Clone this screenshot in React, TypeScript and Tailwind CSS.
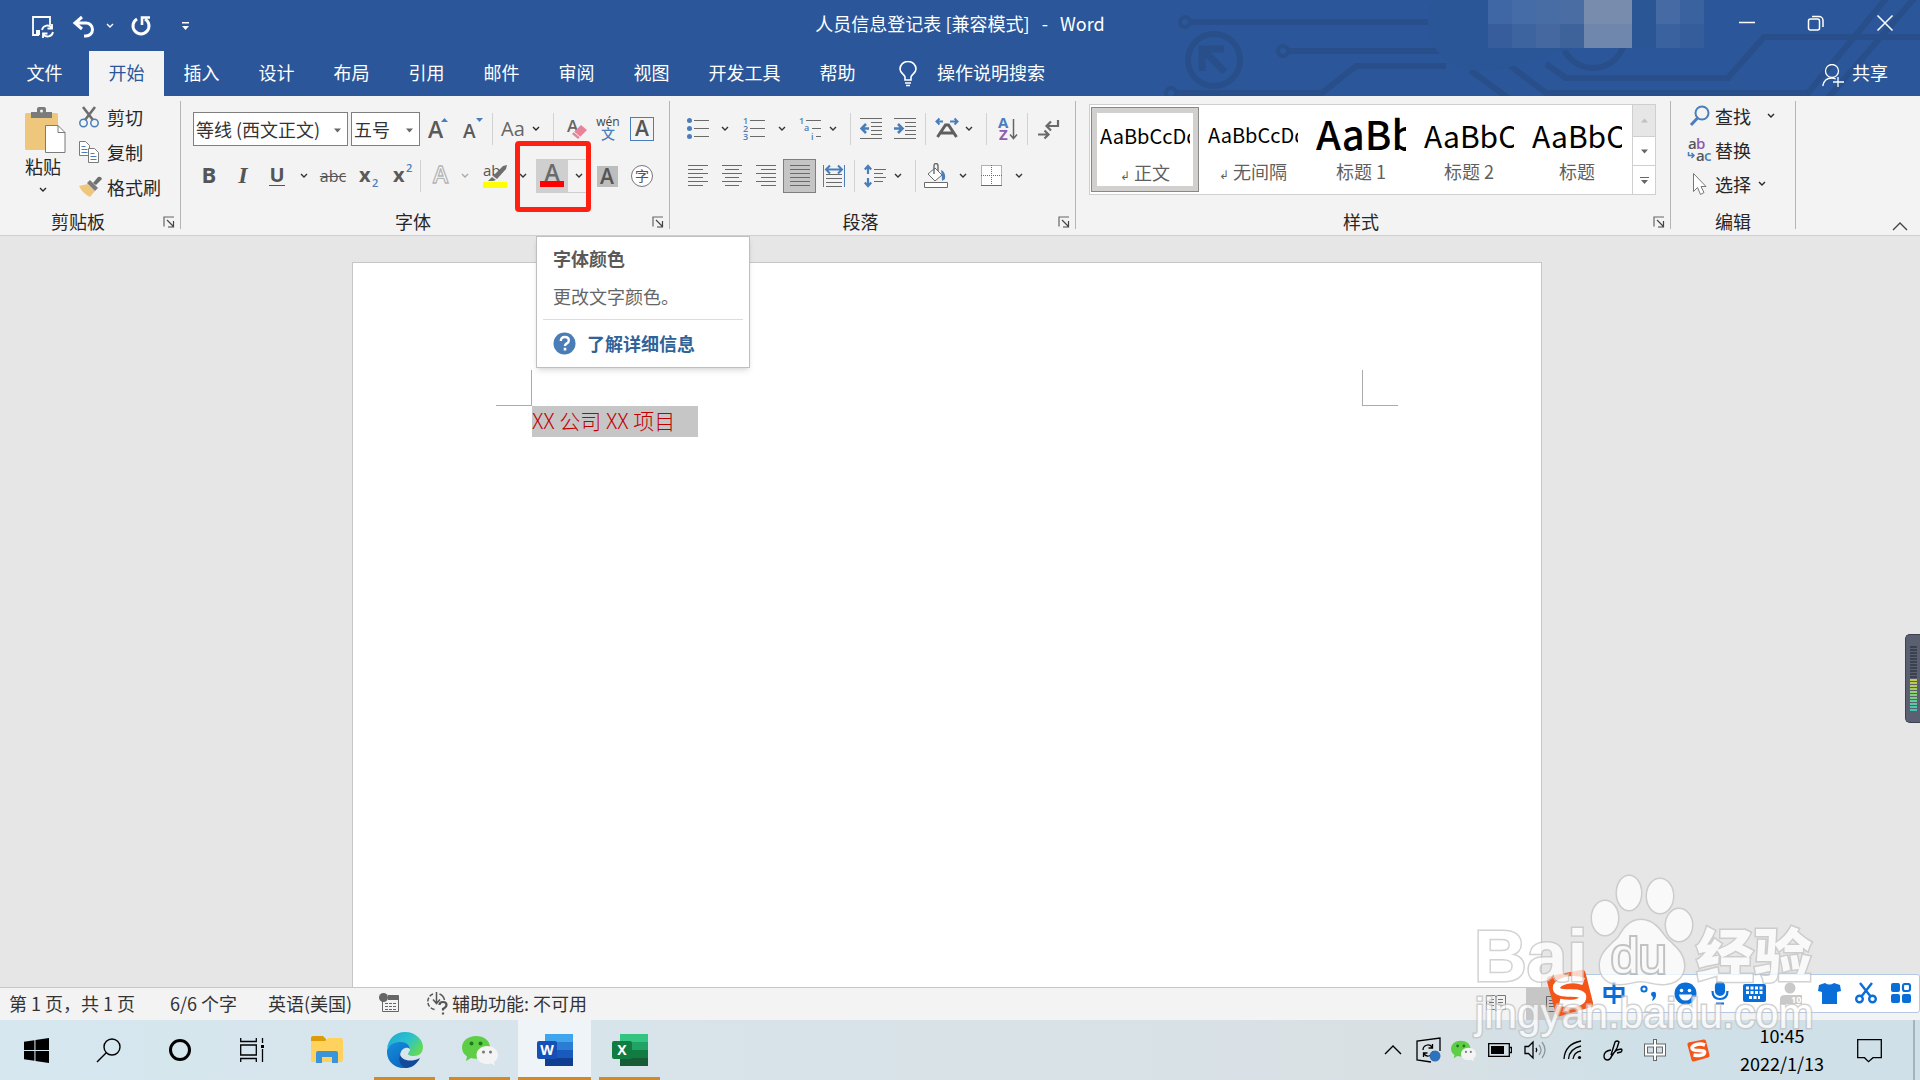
import type { ReactNode } from 'react'
import clsx from 'clsx'

type BoxProps = { className?: string; children?: ReactNode }
type ToolProps = BoxProps & { label: string }

const TABS = ['插入', '设计', '布局', '引用', '邮件', '审阅', '视图']

const STYLES = [
  { name: '正文', sample: 'AaBbCcDd', mark: true, active: true, font: 'text-[20px] pt-1' },
  { name: '无间隔', sample: 'AaBbCcDd', mark: true, active: false, font: 'text-[20px] pt-1' },
  { name: '标题 1', sample: 'AaBbC', mark: false, active: false, font: 'text-[40px] font-medium' },
  { name: '标题 2', sample: 'AaBbC', mark: false, active: false, font: 'text-[30px] pt-1' },
  { name: '标题', sample: 'AaBbC', mark: false, active: false, font: 'text-[30px] pt-1' },
]

const MOSAIC = [
  ['#4067a5', '#466ca8', '#486ca4', '#4a6ea3', '#788dad', '#788dad', '#2a5696', '#466ba4', '#3a629f'],
  ['#375d9c', '#3e64a0', '#44689f', '#3e639b', '#6f87ad', '#6f87ad', '#2a5696', '#3a629e', '#355d9c'],
]

const METER = [
  '#3c4150', '#3c4150', '#3c4150', '#3c4150', '#3c4150', '#3c4150', '#3c4150', '#3c4150', '#3c4150', '#3c4150', '#3c4150',
  '#c3c84f', '#bcca55', '#b0cc5a', '#a3cf62', '#95d06c', '#86cf78', '#76ce86', '#66cb94', '#5ac8a2', '#50c4ac', '#48c0b2',
]

function Tool({ className, label, children }: ToolProps) {
  return (
    <button type="button" aria-label={label} className={clsx('flex h-full shrink-0 items-center justify-center', className)}>
      {children}
    </button>
  )
}

function Chevron() {
  return (
    <svg width="8" height="6" viewBox="0 0 8 6" className="shrink-0" fill="none" stroke="currentColor" strokeWidth="1.4">
      <path d="M1 1l3 3 3-3" />
    </svg>
  )
}

// Drop-down arrow beside a tool
function Drop({ className, label = '更多' }: { className?: string; label?: string }) {
  return (
    <Tool label={label} className={className}>
      <Chevron />
    </Tool>
  )
}

function Sep({ className }: { className?: string }) {
  return <div className={clsx('h-8 w-px shrink-0 bg-[#d2d2d2]', className)} />
}

function Launcher() {
  return (
    <button type="button" aria-label="对话框启动器" className="mt-2 flex w-6 items-center pl-[7px]">
      <svg width="12" height="12" viewBox="0 0 12 12" fill="none" stroke="#666" strokeWidth="1.2">
        <path d="M1 10.500V1h10" />
        <path d="M4 4l6.500 6.500M10.500 5v6H5" stroke="#444" />
      </svg>
    </button>
  )
}

type GroupProps = BoxProps & { label: string; launcher?: boolean; bodyClass?: string }

function Group({ className, bodyClass, label, launcher, children }: GroupProps) {
  return (
    <section aria-label={label} className={clsx('mt-[5px] flex h-32 shrink-0 flex-col border-r border-[#b5b5b5]', className)}>
      <div className={clsx('flex-1', bodyClass)}>{children}</div>
      <div className="flex h-[22px] items-center">
        <span className="mt-[6px] flex-1 text-center">{label}</span>
        {launcher && <Launcher />}
      </div>
    </section>
  )
}

/* ---------- title bar ---------- */

function Circuit() {
  return (
    <svg className="absolute top-0 right-0" width="760" height="96" viewBox="1160 0 760 96" fill="none" stroke="#284f8a" strokeWidth="6">
      <circle cx="1185" cy="22" r="5" strokeWidth="4" />
      <path d="M1190 22H1440" />
      <circle cx="1214" cy="60" r="26" />
      <path d="M1202 71V49H1224M1203 50l22 22" strokeWidth="7" />
      <circle cx="1283" cy="51" r="5" strokeWidth="4" />
      <path d="M1288 51H1440" />
      <circle cx="1171" cy="93" r="5" strokeWidth="4" />
      <path d="M1176 93h146l34-27h90" />
      <path d="M1470 70l38 28M1508 64l38 29h262L1888-4" />
      <path d="M1546 64l20 14h162l36-41h156" />
      <path d="M1828 98l90-104" />
      <circle cx="1593" cy="36" r="32" />
      <path d="M1440-10h160v50l-100 30h-20a48 48 0 0 1-40-80z" fill="#2a5596" stroke="none" />
    </svg>
  )
}

function TitleBar() {
  return (
    <div className="relative flex h-[51px] items-center text-white">
      <div className="flex flex-1 items-center">
        <button type="button" aria-label="保存" className="ml-[31px]">
          <svg width="24" height="24" viewBox="0 0 24 24" fill="none" stroke="white" strokeWidth="1.8">
            <path d="M8 21H2V3h17v8" />
            <path d="M5 21v-5h4v5z" fill="white" stroke="none" />
            <path d="M11 16a5.500 5.500 0 0 1 10-2m0-4v4.500h-4.500M22 18a5.500 5.500 0 0 1-10 2m0 4v-4.500h4.500" />
          </svg>
        </button>
        <button type="button" aria-label="撤消" className="ml-[17px]">
          <svg width="24" height="24" viewBox="0 0 24 24" fill="none" stroke="white" strokeWidth="3">
            <path d="M10 3L3 9l7 6M3.500 9H14a6 6 0 0 1 0 13h-2" />
          </svg>
        </button>
        <Drop className="ml-[6px] w-4" label="撤消列表" />
        <button type="button" aria-label="重复" className="ml-[11px]">
          <svg width="24" height="24" viewBox="0 0 24 24" fill="none" stroke="white" strokeWidth="3">
            <path d="M8 5a8 8 0 1 0 8 0" />
            <path d="M13 11V3.500h8" strokeWidth="2.600" />
          </svg>
        </button>
        <button type="button" aria-label="自定义快速访问工具栏" className="ml-7">
          <svg width="10" height="10" viewBox="0 0 10 10" fill="white">
            <path d="M1 1h7v1.500H1zM1 5h7L4.500 9z" />
          </svg>
        </button>
      </div>
      <h1 className="pb-[6px] whitespace-pre">人员信息登记表 [兼容模式]   -   Word</h1>
      <div className="flex h-12 flex-1 self-start justify-end">
        <div className="grid grid-cols-9 self-start">
          {MOSAIC.flat().map((color, i) => (
            <span key={i} className="h-6 w-6" style={{ background: color }} />
          ))}
        </div>
        <button type="button" aria-label="最小化" className="ml-2 flex w-[69px] justify-center pt-[14px]">
          <svg width="18" height="18" viewBox="0 0 18 18" stroke="white" strokeWidth="1.500"><path d="M1 8.500h16" /></svg>
        </button>
        <button type="button" aria-label="还原" className="flex w-[69px] justify-center pt-[14px]">
          <svg width="18" height="18" viewBox="0 0 18 18" fill="none" stroke="white" strokeWidth="1.500">
            <rect x="1.500" y="5" width="11" height="11" rx="2" />
            <path d="M5 2.500h7a4 4 0 0 1 4 4V13" />
          </svg>
        </button>
        <button type="button" aria-label="关闭" className="mr-px flex w-[69px] justify-center pt-[14px]">
          <svg width="18" height="18" viewBox="0 0 18 18" stroke="white" strokeWidth="1.500"><path d="M1.500 1.500l15 15M16.500 1.500l-15 15" /></svg>
        </button>
      </div>
    </div>
  )
}

function TabBar() {
  return (
    <nav className="relative flex h-[45px] items-stretch text-white">
      <button type="button" className="w-[89px] pb-1">文件</button>
      <button type="button" className="w-[75px] bg-[#f3f3f3] pb-1 text-[#2b579a]">开始</button>
      {TABS.map((tab) => (
        <button key={tab} type="button" className="w-[75px] pb-1">{tab}</button>
      ))}
      <button type="button" className="w-[111px] pb-1">开发工具</button>
      <button type="button" className="w-[75px] pb-1">帮助</button>
      <button type="button" className="flex items-center gap-5 pb-1 pl-6">
        <svg width="18" height="26" viewBox="0 0 18 26" fill="none" stroke="white" strokeWidth="1.600" className="mt-1">
          <path d="M6 19v-3C5 13 1 12 1 8a8 7.500 0 0 1 16 0c0 4-4 5-5 8v3zM6 22h6M7 24.500h4" />
        </svg>
        操作说明搜索
      </button>
      <button type="button" className="mr-8 ml-auto flex items-center gap-2 pb-1">
        <svg width="22" height="24" viewBox="0 0 22 24" fill="none" stroke="white" strokeWidth="1.300" className="mt-2">
          <circle cx="10" cy="7" r="6.500" />
          <path d="M.7 22c1-5 4-8 9-8 2 0 3 .4 4 1M16 13v10M11 18h11" />
        </svg>
        共享
      </button>
    </nav>
  )
}

/* ---------- ribbon groups ---------- */

function Clipboard() {
  return (
    <Group label="剪贴板" launcher className="w-[181px]">
      <div className="flex">
        <button type="button" className="flex w-[77px] flex-col items-center pt-[6px] pl-[9px]">
          <svg width="44" height="46" viewBox="0 0 44 46" className="ml-[5px]">
            <rect x="1" y="6" width="33" height="37" rx="1.500" fill="#efc77c" />
            <path d="M7 5h6V2q0-2 2-2h5q2 0 2 2v3h6v6H7z" fill="#7b7b7b" />
            <circle cx="17.500" cy="4" r="1.500" fill="#f3f3f3" />
            <path d="M21.500 18.500H34l7 7V45.500H21.500z" fill="white" stroke="#7b7b7b" />
            <path d="M34 18.500v7h7" fill="none" stroke="#7b7b7b" />
          </svg>
          <span className="w-10 text-center leading-[26px]">粘贴</span>
          <span className="mt-2"><Chevron /></span>
        </button>
        <div className="flex flex-col">
          <button type="button" className="flex h-[35px] items-center gap-2 pb-1 pl-[2px]">
            <svg width="20" height="22" viewBox="0 0 20 22" fill="none">
              <path d="M4 1l10 13M16 1L6 14" stroke="#6e6e6e" strokeWidth="2.600" />
              <circle cx="4.500" cy="17" r="3.700" stroke="#4a7ebb" strokeWidth="1.500" />
              <circle cx="15.500" cy="17" r="3.700" stroke="#4a7ebb" strokeWidth="1.500" />
            </svg>
            剪切
          </button>
          <button type="button" className="flex h-[35px] items-center gap-2 pb-1 pl-[2px]">
            <svg width="20" height="24" viewBox="0 0 20 24" fill="white" stroke="#7b7b7b">
              <path d="M.5 1.500h6l4 4v10H.5z" />
              <path d="M2.500 6.500h4M2.500 9.500h6M2.500 12.500h6" stroke="#4a7ebb" />
              <path d="M9.500 8.500h6l4 4v10h-10z" />
              <path d="M11.500 13.500h4M11.500 16.500h6M11.500 19.500h6" stroke="#4a7ebb" />
            </svg>
            复制
          </button>
          <button type="button" className="flex h-[35px] items-center gap-1 pb-1 pl-[2px]">
            <svg width="24" height="22" viewBox="0 0 24 22">
              <path d="M0 10l9-2 7 7-5 6q-8-4-11-11z" fill="#efc77c" />
              <path d="M8 7l3-3 8 8-3 3z" fill="#7b7b7b" />
              <path d="M14 7l5-6q3-1 4 2l-6 6z" fill="#6e6e6e" />
            </svg>
            格式刷
          </button>
        </div>
      </div>
    </Group>
  )
}

function Combo({ label, value, className }: { label: string; value: string; className?: string }) {
  return (
    <label className={clsx('relative block h-full shrink-0 border border-[#7f7f7f] bg-white', className)}>
      <select aria-label={label} className="h-full w-full appearance-none px-[2px] text-[#333] outline-none">
        <option>{value}</option>
      </select>
      <svg className="pointer-events-none absolute top-[15px] right-[6px]" width="7" height="5" viewBox="0 0 7 5" fill="#666">
        <path d="M0 .5h7L3.500 4.500z" />
      </svg>
    </label>
  )
}

const latin = "font-['Open_Sans',sans-serif] leading-none"

function FontGroup() {
  return (
    <Group label="字体" launcher className="w-[489px]" bodyClass="pl-3">
      <div className="mt-[11px] flex h-[34px] items-center">
        <Combo label="字体" value="等线 (西文正文)" className="w-[155px]" />
        <Combo label="字号" value="五号" className="ml-[3px] w-[69px]" />
        <Tool label="增大字号" className="w-[35px]">
          <svg width="20" height="24" viewBox="0 0 20 24" className="overflow-visible">
            <text x="0" y="21" fontSize="23" fontWeight="600" fill="#5a5a5a" fontFamily="Open Sans">A</text>
            <path d="M13 5l3.500-4L20 5z" fill="#4a7ebb" />
          </svg>
        </Tool>
        <Tool label="减小字号" className="w-[35px]">
          <svg width="20" height="24" viewBox="0 0 20 24" className="overflow-visible">
            <text x="0" y="21" fontSize="19" fontWeight="600" fill="#5a5a5a" fontFamily="Open Sans">A</text>
            <path d="M13 1l3.500 4L20 1z" fill="#4a7ebb" />
          </svg>
        </Tool>
        <Sep className="mx-[2px]" />
        <Tool label="更改大小写" className={clsx('w-9 text-[20px] font-medium text-[#666]', latin)}>Aa</Tool>
        <Drop className="w-[10px]" />
        <Sep className="mr-[12px] ml-[12px]" />
        <Tool label="清除格式" className="w-[22px]">
          <svg width="20" height="24" viewBox="0 0 20 24" className="overflow-visible">
            <text x="0" y="15" fontSize="17" fontWeight="600" fill="#666" fontFamily="Open Sans">A</text>
            <path d="M5 17l9-9 6 5-9 9z" fill="#e8839a" />
            <path d="M7 15l6 5" stroke="#f3f3f3" />
          </svg>
        </Tool>
        <Tool label="拼音指南" className="w-[42px]">
          <svg width="24" height="26" viewBox="0 0 24 26" className="overflow-visible">
            <text x="11" y="10" fontSize="12" textAnchor="middle" fill="#444" fontFamily="Open Sans">wén</text>
            <text x="11" y="23" fontSize="14" fontWeight="500" textAnchor="middle" fill="#4a7ebb" fontFamily="Noto Sans CJK SC">文</text>
          </svg>
        </Tool>
        <Tool label="字符边框" className="w-6">
          <span className={clsx('h-6 w-6 border border-[#4a7ebb] text-[21px] font-semibold text-[#555]', latin)}>A</span>
        </Tool>
      </div>
      <div className="mt-[13px] flex h-[34px] items-center text-[#555]">
        <Tool label="加粗" className={clsx('w-8 pb-1 text-[22px] font-bold', latin)}>B</Tool>
        <Tool label="倾斜" className="w-9 pb-[2px] font-['Liberation_Serif',serif] text-[24px] leading-none font-bold italic">I</Tool>
        <Tool label="下划线" className={clsx('w-8 pb-[2px] text-[20px] font-bold', latin)}>
          <span className="border-b border-[#555]">U</span>
        </Tool>
        <Drop className="w-[22px] text-[#333]" />
        <Tool label="删除线" className={clsx('w-9 text-[16px] line-through', latin)}>abc</Tool>
        <Tool label="下标" className="w-[34px]">
          <svg width="20" height="26" viewBox="0 0 20 26" fontFamily="Open Sans" className="overflow-visible">
            <text x="1" y="19" fontSize="20" fontWeight="700" fill="#5a5a5a">x</text>
            <text x="14" y="24" fontSize="11" fontWeight="600" fill="#4a7ebb">2</text>
          </svg>
        </Tool>
        <Tool label="上标" className="w-[34px]">
          <svg width="20" height="26" viewBox="0 0 20 26" fontFamily="Open Sans" className="overflow-visible">
            <text x="1" y="19" fontSize="20" fontWeight="700" fill="#5a5a5a">x</text>
            <text x="14" y="9" fontSize="11" fontWeight="600" fill="#4a7ebb">2</text>
          </svg>
        </Tool>
        <Sep className="mr-[2px] ml-px" />
        <Tool label="文本效果" className="w-9">
          <svg width="20" height="24" viewBox="0 0 20 24" className="overflow-visible">
            <text x="2" y="19" fontSize="23" fontWeight="600" fill="white" stroke="#b5b5b5" strokeWidth="1.300" fontFamily="Open Sans">A</text>
          </svg>
        </Tool>
        <Drop className="w-3 text-[#aaa]" />
        <Tool label="文本突出显示颜色" className="w-12">
          <svg width="24" height="26" viewBox="0 0 24 26" className="overflow-visible">
            <text x="0" y="13" fontSize="15" fill="#555" fontFamily="Open Sans">ab</text>
            <path d="M10 13l10-10 4-1-1 4-9 10z" fill="#6e6e6e" />
            <path d="M5 18l4-4 4 3-3 1z" fill="#6e6e6e" />
            <path d="M0 19h24v6H0z" fill="#ff0" />
          </svg>
        </Tool>
        <Drop className="w-2 text-[#333]" />
        <div className="relative ml-[9px] flex h-full">
          <Tool label="字体颜色" className="w-8 bg-[#cfcfcf]">
            <svg width="24" height="26" viewBox="0 0 24 26" className="overflow-visible">
              <text x="12" y="18" fontSize="23" fontWeight="600" textAnchor="middle" fill="#6a6a6a" fontFamily="Open Sans">A</text>
              <path d="M0 18h24v6H0z" fill="red" />
            </svg>
          </Tool>
          <Drop className="w-[18px] border-y border-[#cfcfcf] pl-1 text-[#333]" />
          <div className="pointer-events-none absolute -top-[18px] -left-[21px] z-10 h-[71px] w-[76px] rounded-[4px] border-[5px] border-[#ff2012]" />
        </div>
        <Tool label="字符底纹" className="w-[42px]">
          <span className={clsx('h-[21px] w-[21px] bg-[#bdbdbd] text-[21px] font-semibold', latin)}>A</span>
        </Tool>
        <Tool label="带圈字符" className="w-7">
          <span className="h-[22px] w-[22px] rounded-full border border-[#777] bg-white text-[14px] leading-[18px]">字</span>
        </Tool>
      </div>
    </Group>
  )
}

function Lines({ d, w = 22 }: { d: string; w?: number }) {
  return (
    <svg width={w} height="24" viewBox={`0 0 ${w} 24`} fill="none" stroke="#6a6a6a" className="shrink-0">
      <path d={d} />
    </svg>
  )
}

function ParagraphGroup() {
  return (
    <Group label="段落" launcher className="w-[406px]" bodyClass="pl-[11px]">
      <div className="mt-[11px] flex h-[34px] items-center text-[#333]">
        <Tool label="项目符号" className="w-[34px]">
          <svg width="22" height="24" viewBox="0 0 22 24" fill="#4a7ebb" stroke="#6a6a6a">
            <path d="M7 3.500h15M7 11.500h15M7 19.500h15" />
            <g stroke="none"><circle cx="2.500" cy="3.500" r="2.500" /><circle cx="2.500" cy="11.500" r="2.500" /><circle cx="2.500" cy="19.500" r="2.500" /></g>
          </svg>
        </Tool>
        <Drop className="w-5" />
        <Tool label="编号" className="w-[38px]">
          <svg width="22" height="24" viewBox="0 0 22 24" fill="#4a7ebb" fontSize="9" fontFamily="Open Sans" fontWeight="600" className="overflow-visible">
            <path d="M7 3.500h15M7 11.500h15M7 19.500h15" stroke="#6a6a6a" />
            <text x="0" y="7">1</text><text x="0" y="15">2</text><text x="0" y="23">3</text>
          </svg>
        </Tool>
        <Drop className="w-[18px]" />
        <Tool label="多级列表" className="w-[38px]">
          <svg width="22" height="24" viewBox="0 0 22 24" fill="#4a7ebb" fontSize="9" fontFamily="Open Sans" fontWeight="600" className="overflow-visible">
            <path d="M7 3.500h15M13 11.500h9M17 19.500h5" stroke="#6a6a6a" />
            <text x="0" y="7">1</text><text x="5" y="14">a</text><text x="12" y="23">i</text>
          </svg>
        </Tool>
        <Drop className="w-2" />
        <Sep className="mr-[9px] ml-[13px]" />
        <Tool label="减少缩进量" className="w-[22px]">
          <svg width="22" height="24" viewBox="0 0 22 24" fill="none" stroke="#6a6a6a">
            <path d="M0 1.500h22M11 5.500h11M11 9.500h11M11 13.500h11M11 17.500h11M0 21.500h22" />
            <path d="M9 11.500H2M6 7l-4.500 4.500L6 16" stroke="#4a7ebb" strokeWidth="2.600" />
          </svg>
        </Tool>
        <Tool label="增加缩进量" className="ml-3 w-[22px]">
          <svg width="22" height="24" viewBox="0 0 22 24" fill="none" stroke="#6a6a6a">
            <path d="M0 1.500h22M11 5.500h11M11 9.500h11M11 13.500h11M11 17.500h11M0 21.500h22" />
            <path d="M0 11.500h7M4 7l4.500 4.500L4 16" stroke="#4a7ebb" strokeWidth="2.600" />
          </svg>
        </Tool>
        <Sep className="mx-[9px]" />
        <Tool label="中文版式" className="w-6">
          <svg width="24" height="24" viewBox="0 0 24 24" fill="none" stroke="#4a7ebb" strokeWidth="2">
            <path d="M8 4.500H2M4.500 1.500l-3 3 3 3M15 4.500h7M19.500 1.500l3 3-3 3" />
            <path d="M2.500 20L10.500 8h3l8 12M6 16h12" stroke="#5f5f5f" strokeWidth="3" />
          </svg>
        </Tool>
        <Drop className="w-5" />
        <Sep className="mr-[11px] ml-[7px]" />
        <Tool label="排序" className="w-5">
          <svg width="20" height="26" viewBox="0 0 20 26" fontFamily="Open Sans" fontWeight="700" fontSize="15" className="overflow-visible">
            <text x="0" y="12" fill="#4a7ebb">A</text>
            <text x="1" y="24" fill="#8e5bb0">Z</text>
            <path d="M15.500 3v19M12 18.500l3.500 4 3.500-4" fill="none" stroke="#666" strokeWidth="1.500" />
          </svg>
        </Tool>
        <Sep className="mr-[10px] ml-[9px]" />
        <Tool label="显示编辑标记" className="w-[22px]">
          <svg width="22" height="24" viewBox="0 0 22 24" fill="none" stroke="#6a6a6a" strokeWidth="2.200">
            <path d="M20 3v6H9M13 4.500L8.500 9l4.500 4.500M0 17.500h10M6.500 13.500l4 4-4 4" />
          </svg>
        </Tool>
      </div>
      <div className="mt-[13px] flex h-[34px] items-center text-[#333]">
        <Tool label="左对齐" className="w-[34px]"><Lines w={20} d="M0 1.500h20M0 5.500h15M0 9.500h20M0 13.500h15M0 17.500h20M0 21.500h15" /></Tool>
        <Tool label="居中" className="w-[34px]"><Lines w={20} d="M0 1.500h20M3 5.500h14M0 9.500h20M3 13.500h14M0 17.500h20M3 21.500h14" /></Tool>
        <Tool label="右对齐" className="w-[34px]"><Lines w={20} d="M0 1.500h20M5 5.500h15M0 9.500h20M5 13.500h15M0 17.500h20M5 21.500h15" /></Tool>
        <Tool label="两端对齐" className="w-[33px] border border-[#7f7f7f] bg-[#c5c5c5]"><Lines w={20} d="M0 1.500h20M0 5.500h20M0 9.500h20M0 13.500h20M0 17.500h20M0 21.500h20" /></Tool>
        <Tool label="分散对齐" className="w-9">
          <svg width="22" height="24" viewBox="0 0 22 24" fill="none" stroke="#6a6a6a">
            <path d="M3 10.500h16M3 14.500h16M3 18.500h16M3 22.500h16" />
            <path d="M.5 1v22M21.500 1v22" stroke="#4a7ebb" />
            <path d="M4 5.500h14M7 1.500l-4 4 4 4M15 1.500l4 4-4 4" stroke="#4a7ebb" strokeWidth="2" />
          </svg>
        </Tool>
        <Sep className="mr-[9px] ml-[2px]" />
        <Tool label="行和段落间距" className="w-[22px]">
          <svg width="22" height="24" viewBox="0 0 22 24" fill="none" stroke="#6a6a6a">
            <path d="M10 5.500h12M10 9.500h9M10 13.500h12M10 17.500h9" />
            <path d="M4 2v8M.8 5.500L4 2l3.200 3.500M4 14v8M.8 18.500L4 22l3.200-3.500" stroke="#4a7ebb" strokeWidth="2.200" />
          </svg>
        </Tool>
        <Drop className="w-6" />
        <Sep className="mr-2 ml-[5px]" />
        <Tool label="底纹" className="w-6">
          <svg width="24" height="26" viewBox="0 0 24 26" fill="white" stroke="#6a6a6a">
            <path d="M11 5l7 7-7 6-7-7z" />
            <path d="M10 11V3q0-2.500 2-2.500T14 3v5" fill="none" strokeWidth="1.400" />
            <path d="M17 7q5 2 4 9l-3 2q0-6-1-11z" fill="#4a7ebb" stroke="none" />
            <path d="M.5 19.500h23v5H.5z" />
          </svg>
        </Tool>
        <Drop className="w-[30px]" />
        <Tool label="边框" className="w-7">
          <svg width="22" height="24" viewBox="0 0 22 24" fill="white" stroke="#6a6a6a">
            <path d="M.5 1.500h20v20H.5zM10.500 1v20M0 11.500h21" strokeDasharray="1 1" />
            <path d="M0 21.500h21" />
          </svg>
        </Tool>
        <Drop className="w-[26px]" />
      </div>
    </Group>
  )
}

function StylesGroup() {
  return (
    <Group label="样式" launcher className="w-[595px]" bodyClass="pl-[13px]">
      <div className="mt-[3px] flex h-[91px] w-[567px] border border-[#cfcfcf] bg-white pl-px">
        {STYLES.map((s) => (
          <button
            key={s.name}
            type="button"
            className={clsx(
              'my-[2px] flex w-[108px] shrink-0 flex-col items-center px-1',
              s.active && 'border border-[#8a8886] bg-white ring-5 ring-[#d2d0ce] ring-inset',
            )}
          >
            <span className={clsx('flex h-[51px] w-[90px] items-center overflow-hidden leading-none whitespace-nowrap text-black', s.font)}>
              {s.sample}
            </span>
            <span className="leading-[26px] text-[#5f5f5f]">
              {s.mark && <span className="mr-1 text-[12px]">↲</span>}
              {s.name}
            </span>
          </button>
        ))}
        <div className="ml-auto flex w-[23px] flex-col border-l border-[#cfcfcf]">
          <button type="button" aria-label="上一行" className="flex h-[31px] items-center justify-center bg-[#e6e6e6]">
            <svg width="7" height="5" fill="#c0c0c0"><path d="M0 4.500h7L3.500.5z" /></svg>
          </button>
          <button type="button" aria-label="下一行" className="flex h-[30px] items-center justify-center border-y border-[#cfcfcf]">
            <svg width="7" height="5" fill="#666"><path d="M0 .5h7L3.500 4.500z" /></svg>
          </button>
          <button type="button" aria-label="其他样式" className="flex flex-1 items-center justify-center">
            <svg width="9" height="9" fill="#666"><path d="M0 1h9v1H0zM1 4h7L4.500 8z" /></svg>
          </button>
        </div>
      </div>
    </Group>
  )
}

function EditGroup() {
  return (
    <Group label="编辑" className="w-[125px]">
      <div className="flex flex-col pl-4">
        <button type="button" className="flex h-[34px] items-center pb-1">
          <svg width="28" height="22" viewBox="0 0 28 22" fill="none" stroke="#4a7ebb">
            <circle cx="15" cy="8" r="6.500" strokeWidth="2" />
            <path d="M10.500 13L4 20" strokeWidth="3" />
          </svg>
          查找
          <span className="ml-4"><Chevron /></span>
        </button>
        <button type="button" className="flex h-[34px] items-center pb-1">
          <svg width="28" height="26" viewBox="0 0 28 26" fontSize="15" fontWeight="600" fontFamily="Open Sans" className="overflow-visible">
            <text x="1" y="12" fill="#555">a</text>
            <text x="9" y="12" fill="#8e5bb0">b</text>
            <text x="9" y="24" fill="#555">a</text>
            <text x="17" y="24" fill="#4a7ebb">c</text>
            <path d="M1.500 15v3.500h5M4.500 16l2.500 2.500L4.500 21" fill="none" stroke="#4a7ebb" strokeWidth="1.500" />
          </svg>
          替换
        </button>
        <button type="button" className="flex h-[34px] items-center pb-1">
          <svg width="28" height="24" viewBox="0 0 28 24" fill="white" stroke="#777">
            <path d="M6.500 1.500v18l4-4 3 7 3.500-2-3-6h5z" />
          </svg>
          选择
          <span className="ml-[7px]"><Chevron /></span>
        </button>
      </div>
    </Group>
  )
}

function Ribbon() {
  return (
    <div className="flex h-[140px] border-b border-[#cfcfcf] bg-[#f3f3f3] text-[#262626]">
      <Clipboard />
      <FontGroup />
      <ParagraphGroup />
      <StylesGroup />
      <EditGroup />
      <button type="button" aria-label="折叠功能区" className="mt-auto mr-3 mb-1 ml-auto">
        <svg width="16" height="10" viewBox="0 0 16 10" fill="none" stroke="#444" strokeWidth="1.400"><path d="M1 9l7-7 7 7" /></svg>
      </button>
    </div>
  )
}

/* ---------- document ---------- */

function FontTooltip() {
  return (
    <div role="tooltip" className="absolute top-0 left-[536px] w-[214px] border border-[#bfbfbf] bg-white px-[6px] pb-2 text-[#666] shadow-md">
      <p className="px-[10px] pt-[7px] leading-7 font-bold text-[#595959]">字体颜色</p>
      <p className="px-[10px] pt-[10px] pb-[9px] leading-7">更改文字颜色。</p>
      <a href="#help" className="flex items-center gap-[11px] border-t border-[#dcdcdc] px-[10px] pt-[9px] pb-[2px] leading-[28px] font-bold text-[#2f6399]">
        <svg width="23" height="23" viewBox="0 0 23 23">
          <circle cx="11.500" cy="11.500" r="11" fill="#4a7db5" />
          <path d="M7.800 9q0-4 4-4t4 3.400q0 2-2.200 3.200-1.600 1-1.600 2.400" fill="none" stroke="white" strokeWidth="2.400" />
          <path d="M10.700 15.800h2.600v2.600h-2.600z" fill="white" />
        </svg>
        了解详细信息
      </a>
    </div>
  )
}

function VolumeWidget() {
  return (
    <div className="absolute top-[398px] right-0 flex h-[89px] w-[15px] flex-col items-center justify-center gap-px rounded-l-[5px] border border-r-0 border-[#3d4250] bg-[#5a6072]">
      {METER.map((color, i) => (
        <span key={i} className="h-[2px] w-[7px]" style={{ background: color }} />
      ))}
    </div>
  )
}

function DocumentArea() {
  return (
    <main className="relative flex flex-1 justify-center bg-[#e6e6e6] pt-[26px] pr-[26px]">
      <div className="w-[1190px] border border-b-0 border-[#c6c6c6] bg-white px-[143px] pt-[107px]">
        <div className="flex h-9 justify-between">
          <span className="w-9 border-r border-b border-[#ababab]" />
          <span className="w-9 border-b border-l border-[#ababab]" />
        </div>
        <p className="ml-9 h-[31px] w-[166px] bg-[#c6c6c6] text-[21px] leading-[29px] font-light whitespace-nowrap text-[#c00000]">
          XX 公司 XX 项目
        </p>
      </div>
      <FontTooltip />
      <VolumeWidget />
    </main>
  )
}

function StatusBar() {
  return (
    <footer className="flex h-[33px] items-center border-t border-[#c6c6c6] bg-[#f3f3f3] pb-[2px] pl-[9px] text-[#333]">
      <span className="w-[161px]">第 1 页，共 1 页</span>
      <span className="w-[98px]">6/6 个字</span>
      <span className="w-[111px]">英语(美国)</span>
      <svg width="20" height="20" viewBox="0 0 20 20" fill="none" stroke="#666">
        <path d="M3.500 6v12.500h16V2.500H9" />
        <path d="M9 3h10v4H9z" fill="#666" stroke="none" />
        <path d="M6 10.500h11M6 13.500h11M6 16.500h11" strokeDasharray="3 1" />
        <circle cx="4.500" cy="4.500" r="4.500" fill="#666" stroke="none" />
      </svg>
      <svg width="22" height="24" viewBox="0 0 22 24" fill="none" stroke="#555" strokeWidth="1.500" className="ml-7">
        <path d="M6 3A8 8 0 0 0 9 18.500" strokeDasharray="4 1.500" />
        <path d="M9.500 1v11M6 8.500l3.500 4 3.500-4M12.500 3q4 1.500 5 6" />
        <path d="M12.500 14q0-3 3.500-3t3.500 3q0 2-3.500 4v1.500M16 21.500v2" strokeWidth="2.200" />
      </svg>
      <span className="ml-[3px] flex-1">辅助功能: 不可用</span>
      <button type="button" aria-label="阅读视图" className="mr-5">
        <svg width="20" height="18" viewBox="0 0 20 18" fill="none" stroke="#777">
          <path d="M.5 1.500h8l1.500 1 1.500-1h8v14h-8L10 17l-1.500-1.500h-8zM10 2v14M3 5.500h5M3 8.500h5M3 11.500h5M12 5.500h5M12 8.500h5M12 11.500h5" />
        </svg>
      </button>
      <button type="button" aria-label="页面视图" className="mr-[338px] -mb-[2px] flex h-8 w-14 items-center justify-center bg-[#c6c6c6]">
        <svg width="18" height="18" viewBox="0 0 18 18" fill="none" stroke="#666">
          <path d="M1.500 1.500h15v15h-15zM4 5.500h10M4 8.500h10M4 11.500h10" />
        </svg>
      </button>
    </footer>
  )
}

/* ---------- taskbar ---------- */

function WeChat({ size }: { size: number }) {
  return (
    <svg width={size} height={size} viewBox="0 0 36 36">
      <path d="M14 4C6 4 0 9 0 15.500c0 4 2 7 5 9L4 29l5-3q2 .7 5 .7c8 0 14-5 14-11.500S22 4 14 4z" fill="#5fce47" />
      <path d="M25 14c-6 0-10.500 4-10.500 9S19 32 25 32q2 0 4-.6l4 2-1-3.400c2.500-2 4-4 4-7 0-5-5-9-11-9z" fill="#f4f4f4" />
      <circle cx="9.500" cy="11.500" r="2" fill="#1f7a1c" /><circle cx="18.500" cy="11.500" r="2" fill="#1f7a1c" />
      <circle cx="21.500" cy="20" r="1.500" fill="#777" /><circle cx="28.500" cy="20" r="1.500" fill="#777" />
    </svg>
  )
}

function Sogou({ size }: { size: number }) {
  return (
    <svg width={size} height={size} viewBox="0 0 46 46" className="shrink-0">
      <path d="M3 7L33 1q4-1 5 3l7 28q1 4-3 5l-28 8q-4 1-5-3L1 12q-1-4 2-5z" fill="#f4561a" />
      <path d="M36 12q-8-3-17-1-9 3-9 7c0 5 8 5 14 5 7 0 12 1 11 5-1 5-12 6-22 4" fill="none" stroke="white" strokeWidth="7" />
    </svg>
  )
}

function OfficeIcon({ letter, colors, tile }: { letter: string; colors: string[]; tile: string }) {
  return (
    <svg width="36" height="36" viewBox="0 0 36 36">
      {colors.map((color, i) => (
        <rect key={color} x="8" y={2 + i * 8} width="28" height="8" fill={color} />
      ))}
      <rect x="0" y="9" width="20" height="18" rx="2" fill={tile} />
      <text x="10" y="23" fontSize="14" fontWeight="700" textAnchor="middle" fill="white" fontFamily="Open Sans">{letter}</text>
    </svg>
  )
}

function AppButton({ label, active, children }: { label: string; active?: boolean; children: ReactNode }) {
  return (
    <button
      type="button"
      aria-label={label}
      className={clsx('ml-[2px] flex h-full w-[73px] flex-col items-center pt-3', active && 'bg-[#eef4f8]')}
    >
      {children}
      <span className={clsx('mt-auto h-[3px] bg-[#cf8a2b]', active ? 'w-full' : 'w-[61px]')} />
    </button>
  )
}

function Tray() {
  return (
    <div className="ml-auto flex h-full items-center">
      <button type="button" aria-label="显示隐藏的图标" className="w-8">
        <svg width="18" height="12" viewBox="0 0 18 12" fill="none" stroke="black" strokeWidth="1.400"><path d="M1 10l8-8 8 8" /></svg>
      </button>
      <svg width="26" height="26" viewBox="0 0 26 26" fill="none" stroke="black" strokeWidth="1.300" className="mr-[9px]">
        <path d="M24 14V1L1 4v19l14 2" />
        <path d="M7 13a5 5 0 0 1 9-3m.500-3v4h-4M17 14a5 5 0 0 1-9 3m-.500 3v-4h4" />
        <circle cx="19" cy="19" r="5.500" fill="#2f72ba" stroke="none" />
      </svg>
      <WeChat size={25} />
      <svg width="24" height="14" viewBox="0 0 24 14" className="ml-3">
        <path d="M.7.7h20.600v12.600H.7zM22 4.500h1.500v5H22" fill="none" stroke="black" strokeWidth="1.300" />
        <path d="M3 3h13v8H3z" />
      </svg>
      <svg width="23" height="20" viewBox="0 0 23 20" fill="none" stroke="black" strokeWidth="1.300" className="ml-3">
        <path d="M1 6.500h3.500L9 2v16l-4.500-4.500H1zM12 8q1.500 2 0 4" />
        <path d="M15 5q4 5 0 10M18 2q6 8 0 16" stroke="#8a979e" />
      </svg>
      <svg width="20" height="20" viewBox="0 0 20 20" fill="none" stroke="black" strokeWidth="1.300" className="ml-4">
        <path d="M1 19Q2 4 18 1M5.500 19Q6 9 18 6M10 19q1-7 8-8" />
        <circle cx="16.500" cy="17.500" r="1.600" fill="black" stroke="none" />
      </svg>
      <svg width="20" height="21" viewBox="0 0 20 21" fill="none" stroke="black" strokeWidth="1.400" className="ml-5">
        <path d="M8 15L12 2q2-2 4 0L14 8l-5 8M8 10q-7 1-7 6 0 4 4 4 3-1 4-5 1-2 5-5l4-1q2 1 0 3l-4 1" />
      </svg>
      <svg width="22" height="22" viewBox="0 0 22 22" fill="none" className="ml-[21px]">
        <path d="M2 6.500h18v9H2zM11 0v22" stroke="#666" strokeWidth="4" />
        <path d="M2 6.500h18v9H2zM11 1v20" stroke="white" strokeWidth="2" />
      </svg>
      <span className="ml-[21px]"><Sogou size={23} /></span>
      <time className="ml-5 w-[104px] pb-[3px] text-center leading-7 text-black">10:45<br />2022/1/13</time>
      <button type="button" aria-label="通知" className="mr-[31px] ml-[23px]">
        <svg width="25" height="25" viewBox="0 0 25 25" fill="none" stroke="black" strokeWidth="1.300">
          <path d="M.7 1.700h23.600v18H16l-4.500 4-4-4H.7z" />
        </svg>
      </button>
      <span className="h-full w-[7px] border-l-2 border-[#a4b4bd]" />
    </div>
  )
}

// Explorer is pinned only, Edge has an open window
function PinnedApps() {
  return (
    <>
      <button type="button" aria-label="文件资源管理器" className="flex w-[78px] justify-center">
        <svg width="32" height="28" viewBox="0 0 32 28">
          <path d="M0 2q0-2 2-2h10l3 3v5H0z" fill="#dd9a09" />
          <path d="M0 5h14l3-3h13q2 0 2 2v20q0 2-2 2H2q-2 0-2-2z" fill="#ffd25e" />
          <path d="M5 27V17q0-2 2-2h18q2 0 2 2v10h-6v-6H11v6z" fill="#3a94da" />
        </svg>
      </button>
      <AppButton label="Edge">
        <svg width="36" height="36" viewBox="0 0 36 36">
          <defs>
            <linearGradient id="edgeTop" x1="0" y1="0" x2="1" y2=".6">
              <stop offset="0" stopColor="#1ea5de" /><stop offset=".6" stopColor="#2cc3c8" /><stop offset="1" stopColor="#62d95a" />
            </linearGradient>
            <linearGradient id="edgeLow" x1="0" y1="0" x2=".6" y2="1">
              <stop offset="0" stopColor="#1590dc" /><stop offset="1" stopColor="#0b66c0" />
            </linearGradient>
          </defs>
          <path d="M0 17C1 7 8 0 18 0c11 0 18 8 18 15 0 6-4 9-9 9-6 0-7-2-5-4 3-4 0-9-7-9C8 11 2 13 0 17z" fill="url(#edgeTop)" />
          <path d="M0 18c2-6 8-8 14-8 5 0 9 3 9 7-3-3-9-1-10 6-1 6 3 11 9 13C9 38-1 30 0 18z" fill="url(#edgeLow)" />
          <path d="M13 22c1 6 10 9 20 4-3 6-8 10-14 10-6-2-8-8-6-14z" fill="#114a9a" />
        </svg>
      </AppButton>
    </>
  )
}

function Taskbar() {
  return (
    <div className="flex h-[60px] items-center bg-linear-to-r from-[#d6e7ef] via-[#d9e0e4] via-73% to-[#cfe0e8] to-85%">
      <button type="button" aria-label="开始" className="flex w-[72px] justify-center">
        <svg width="25" height="25" viewBox="0 0 24 24"><path d="M0 3.500l10-1.400V11.500H0zM11 2l13-1.900V11.500H11zM0 12.500h10v9.400L0 20.500zM11 12.500h13V24l-13-2z" /></svg>
      </button>
      <button type="button" aria-label="搜索" className="flex w-[72px] justify-center">
        <svg width="25" height="25" viewBox="0 0 25 25" fill="none" stroke="black" strokeWidth="1.400"><circle cx="16" cy="9" r="8" /><path d="M10.500 14.500L1 24" /></svg>
      </button>
      <button type="button" aria-label="Cortana" className="flex w-[72px] justify-center">
        <svg width="24" height="24" viewBox="0 0 24 24" fill="none" stroke="black" strokeWidth="3"><circle cx="12" cy="12" r="9.500" /></svg>
      </button>
      <button type="button" aria-label="任务视图" className="flex w-[72px] justify-center">
        <svg width="24" height="24" viewBox="0 0 24 24" fill="none" stroke="black" strokeWidth="1.300">
          <path d="M.7 0v3.500h15.600V0M.7 7h15.600v10H.7zM.7 24v-3.500h15.600V24M22.500 0v5M22.500 11v13" />
          <path d="M21 7h3v3h-3z" fill="black" stroke="none" />
        </svg>
      </button>
      <PinnedApps />
      <AppButton label="微信"><WeChat size={36} /></AppButton>
      <AppButton label="Word" active>
        <OfficeIcon letter="W" colors={['#41a5ee', '#2b7cd3', '#185abd', '#103f91']} tile="#1650b5" />
      </AppButton>
      <AppButton label="Excel">
        <OfficeIcon letter="X" colors={['#33c481', '#21a366', '#107c41', '#185c37']} tile="#107c41" />
      </AppButton>
      <Tray />
    </div>
  )
}

/* ---------- floating input bar and watermark ---------- */

function InputBar() {
  return (
    <div className="absolute right-0 bottom-16 flex h-[46px] items-center">
      <div className="z-10 -mr-4"><Sogou size={48} /></div>
      <div className="flex h-[39px] w-[342px] items-center justify-between rounded-r-[3px] border border-[#b4c9e6] bg-white pr-2 pl-6 text-[#0a6ed9]">
        <svg width="22" height="22" viewBox="0 0 22 22" fill="none" stroke="currentColor" strokeWidth="3"><path d="M2 6.500h18v8H2zM11 0v22" /></svg>
        <svg width="20" height="22" viewBox="0 0 20 22" fill="none" stroke="currentColor" strokeWidth="2"><circle cx="5" cy="7" r="2.600" /><path d="M14 10q3-1 3 3t-4 6q1-3 1-4-2-1-2-3t2-2z" fill="currentColor" stroke="none" /></svg>
        <svg width="23" height="23" viewBox="0 0 23 23" fill="currentColor"><circle cx="11.500" cy="11.500" r="11" /><circle cx="7.500" cy="8.500" r="1.800" fill="white" /><circle cx="15.500" cy="8.500" r="1.800" fill="white" /><path d="M5 12.500h13q-1 6-6.500 6T5 12.500z" fill="white" /></svg>
        <svg width="18" height="24" viewBox="0 0 18 24" fill="none" stroke="currentColor" strokeWidth="2.200"><rect x="5" y="1" width="8" height="13" rx="4" fill="currentColor" /><path d="M1.500 10q0 8 7.500 8t7.500-8M5 22.500h8" /></svg>
        <svg width="23" height="18" viewBox="0 0 23 18"><rect width="23" height="18" rx="2" fill="currentColor" /><path d="M3 4h17M3 8.500h17M6 13.500h11" stroke="white" strokeWidth="3" strokeDasharray="3 1.500" /></svg>
        <svg width="23" height="23" viewBox="0 0 23 23" fill="#c9c9c9"><circle cx="10" cy="6" r="5.500" /><path d="M0 22v-5q0-4 5-4h17v9z" /><text x="11" y="21" fontSize="9" fontWeight="700" fill="white" fontFamily="Open Sans">10</text></svg>
        <svg width="23" height="21" viewBox="0 0 23 21" fill="currentColor"><path d="M7 0q4.500 3 9 0l6 2 1 6-4 1v12H4V9L0 8l1-6z" /></svg>
        <svg width="22" height="22" viewBox="0 0 22 22" fill="none" stroke="currentColor" strokeWidth="2.400"><path d="M5 1l11 14M17 1L6 15" /><circle cx="4.500" cy="17" r="3.300" /><circle cx="17.500" cy="17" r="3.300" /></svg>
        <svg width="20" height="20" viewBox="0 0 20 20" fill="currentColor"><rect width="9" height="9" rx="2" /><rect x="12" y="1" width="7" height="7" rx="2" fill="none" stroke="currentColor" strokeWidth="2.200" /><rect y="11" width="9" height="9" rx="2" /><rect x="11" y="11" width="9" height="9" rx="2" /></svg>
      </div>
    </div>
  )
}

function Watermark() {
  return (
    <svg
      className="pointer-events-none absolute right-[100px] bottom-[36px] z-20"
      width="350"
      height="174"
      viewBox="1470 870 350 174"
      fill="white"
      stroke="#c4c4c4"
      strokeWidth="3"
      paintOrder="stroke"
      opacity="0.76"
      fontWeight="700"
    >
      <text x="1474" y="981" fontSize="73" fontFamily="Liberation Sans">Bai</text>
      <ellipse cx="1605" cy="918" rx="13" ry="17" />
      <ellipse cx="1629" cy="893" rx="12" ry="17" />
      <ellipse cx="1660" cy="896" rx="13" ry="17" />
      <ellipse cx="1679" cy="925" rx="13" ry="16" />
      <path d="M1641 920c-12 0-18 10-22 17-8 9-19 15-19 29 0 12 9 18 20 18 9 0 14-3 21-3s12 3 21 3c12 0 22-6 22-18 0-14-11-20-19-29-5-7-12-17-24-17z" />
      <text x="1611" y="973" fontSize="50" fontFamily="Liberation Sans" fontWeight="400" strokeWidth="4" stroke="#b8b8b8">du</text>
      <text x="1696" y="977" fontSize="58" fontWeight="900" fontFamily="Noto Sans CJK SC">经验</text>
      <text x="1475" y="1028" fontSize="42" fontWeight="400" fontFamily="Liberation Sans">jingyan.baidu.com</text>
    </svg>
  )
}

export default function App() {
  return (
    <div className="relative flex min-h-screen flex-col overflow-hidden font-['Noto_Sans_CJK_SC',sans-serif] text-[18px] leading-6">
      <header className="relative bg-[#2b579a]">
        <Circuit />
        <TitleBar />
        <TabBar />
      </header>
      <Ribbon />
      <DocumentArea />
      <StatusBar />
      <Taskbar />
      <InputBar />
      <Watermark />
    </div>
  )
}
